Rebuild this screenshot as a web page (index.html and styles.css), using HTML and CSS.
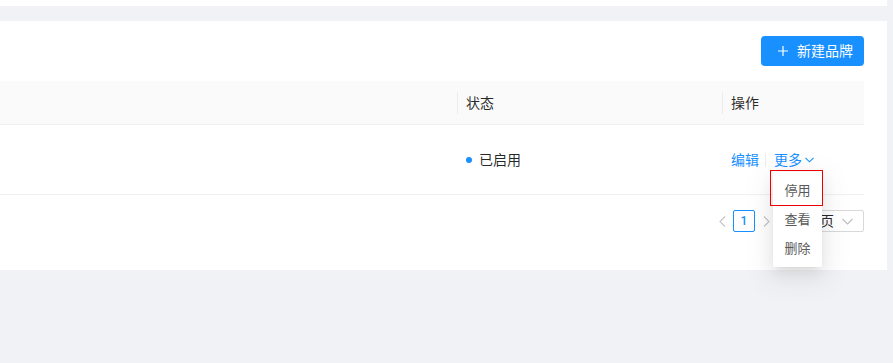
FILE: index.html
```html
<!DOCTYPE html>
<html lang="zh-CN">
<head>
<meta charset="utf-8">
<title>品牌管理</title>
<link rel="stylesheet" href="styles.css">
</head>
<body>
<div class="page">
  <div class="top-card"></div>
  <div class="card">
    <div class="toolbar">
      <button class="btn-primary">
        <svg class="plus" width="10" height="10" viewBox="0 0 10 10"><path d="M5 0v10M0 5h10" stroke="#fff" stroke-width="1.2" fill="none"/></svg>
        <span>新建品牌</span>
      </button>
    </div>
    <div class="table">
      <div class="row thead">
        <div class="cell th"></div>
        <div class="cell th">状态</div>
        <div class="cell th">操作</div>
      </div>
      <div class="row tbody">
        <div class="cell td"></div>
        <div class="cell td"><span class="dot"></span>已启用</div>
        <div class="cell td actions">
          <a class="link">编辑</a>
          <span class="divider"></span>
          <a class="link more">更多<svg class="chev" width="9" height="6" viewBox="0 0 9 6"><path d="M0.5 0.8L4.5 4.8L8.5 0.8" stroke="#1890ff" stroke-width="1.1" fill="none"/></svg></a>
        </div>
      </div>
    </div>
    <div class="pagination">
      <span class="pg-arrow"><svg width="7" height="11" viewBox="0 0 7 11"><path d="M6 0.5L1 5.5L6 10.5" stroke="#c4c4c4" stroke-width="1.1" fill="none"/></svg></span>
      <span class="pg-item active">1</span>
      <span class="pg-arrow"><svg width="7" height="11" viewBox="0 0 7 11"><path d="M1 0.5L6 5.5L1 10.5" stroke="#c4c4c4" stroke-width="1.1" fill="none"/></svg></span>
      <span class="pg-select"><span class="pg-select-text">10 条/页</span><svg class="pg-chev" width="11" height="7" viewBox="0 0 11 7"><path d="M0.5 1L5.5 6L10.5 1" stroke="#bfbfbf" stroke-width="1.1" fill="none"/></svg></span>
    </div>
  </div>
</div>
<div class="dropdown">
  <div class="dd-item">停用</div>
  <div class="dd-item">查看</div>
  <div class="dd-item">删除</div>
</div>
<div class="highlight"></div>
</body>
</html>
```

FILE: styles.css
```css
* { box-sizing: border-box; }
html, body { margin: 0; padding: 0; }
body {
  background: #f0f2f5;
  font-family: Roboto, "Noto Sans CJK SC", sans-serif;
  font-size: 14px;
  color: rgba(0,0,0,0.85);
  height: 363px;
  overflow: hidden;
  position: relative;
}
.top-card {
  height: 6px;
  background: #fff;
  margin-right: 6px;
}
.card {
  margin-top: 15px;
  margin-right: 6px;
  background: #fff;
  padding: 15px 23px 38px 0;
}
.toolbar {
  display: flex;
  justify-content: flex-end;
  margin-bottom: 15px;
}
.btn-primary {
  height: 30px;
  display: flex;
  align-items: center;
  gap: 9px;
  padding: 0 11px 0 17px;
  background: #1890ff;
  color: #fff;
  border: none;
  border-radius: 4px;
  font-family: inherit;
  font-size: 14px;
  line-height: 22px;
}
.plus { display: block; }
.table { width: 100%; }
.row {
  display: grid;
  grid-template-columns: 1fr 265px 141px;
  border-bottom: 1px solid #f0f0f0;
}
.thead { height: 44px; background: #fafafa; }
.tbody { height: 70px; }
.cell {
  position: relative;
  display: flex;
  align-items: center;
  padding: 0 8px;
  line-height: 22px;
}
.th:not(:last-child)::before {
  content: "";
  position: absolute;
  right: 0;
  top: 50%;
  width: 1px;
  height: 22px;
  margin-top: -11px;
  background: #ececec;
}
.dot {
  width: 6px;
  height: 6px;
  border-radius: 50%;
  background: #1890ff;
  margin-right: 7px;
}
.link { color: #1890ff; cursor: pointer; }
.divider {
  width: 1px;
  height: 14px;
  background: #ececec;
  margin: 0 8px 0 6px;
}
.more { display: flex; align-items: center; }
.chev { margin-left: 3px; margin-top: 1px; }
.pagination {
  margin-top: 15px;
  display: flex;
  justify-content: flex-end;
  align-items: center;
  height: 22px;
}
.pg-arrow {
  width: 22px;
  height: 22px;
  display: flex;
  align-items: center;
  justify-content: center;
}
.pg-item {
  width: 22px;
  height: 22px;
  border-radius: 2px;
  display: flex;
  align-items: center;
  justify-content: center;
  font-size: 12px;
}
.pg-item.active {
  border: 1px solid #1890ff;
  color: #1890ff;
  font-weight: 500;
}
.pg-select {
  width: 87px;
  height: 22px;
  border: 1px solid #d9d9d9;
  border-radius: 2px;
  display: flex;
  align-items: center;
  justify-content: flex-end;
  padding-right: 10px;
  line-height: 20px;
  color: rgba(0,0,0,0.85);
}
.pg-chev { margin-left: 8px; }
.dropdown {
  position: absolute;
  left: 773px;
  top: 172px;
  width: 49px;
  padding: 4px 0;
  background: #fff;
  border-radius: 2px;
  box-shadow: 0 3px 6px -4px rgba(0,0,0,0.12), 0 6px 16px 0 rgba(0,0,0,0.08), 0 9px 28px 8px rgba(0,0,0,0.05);
}
.dd-item {
  height: 29px;
  line-height: 29px;
  text-align: center;
  font-size: 13px;
  color: #595959;
}
.highlight {
  position: absolute;
  left: 770px;
  top: 170px;
  width: 53px;
  height: 36px;
  border: 1px solid #e00;
}
```
